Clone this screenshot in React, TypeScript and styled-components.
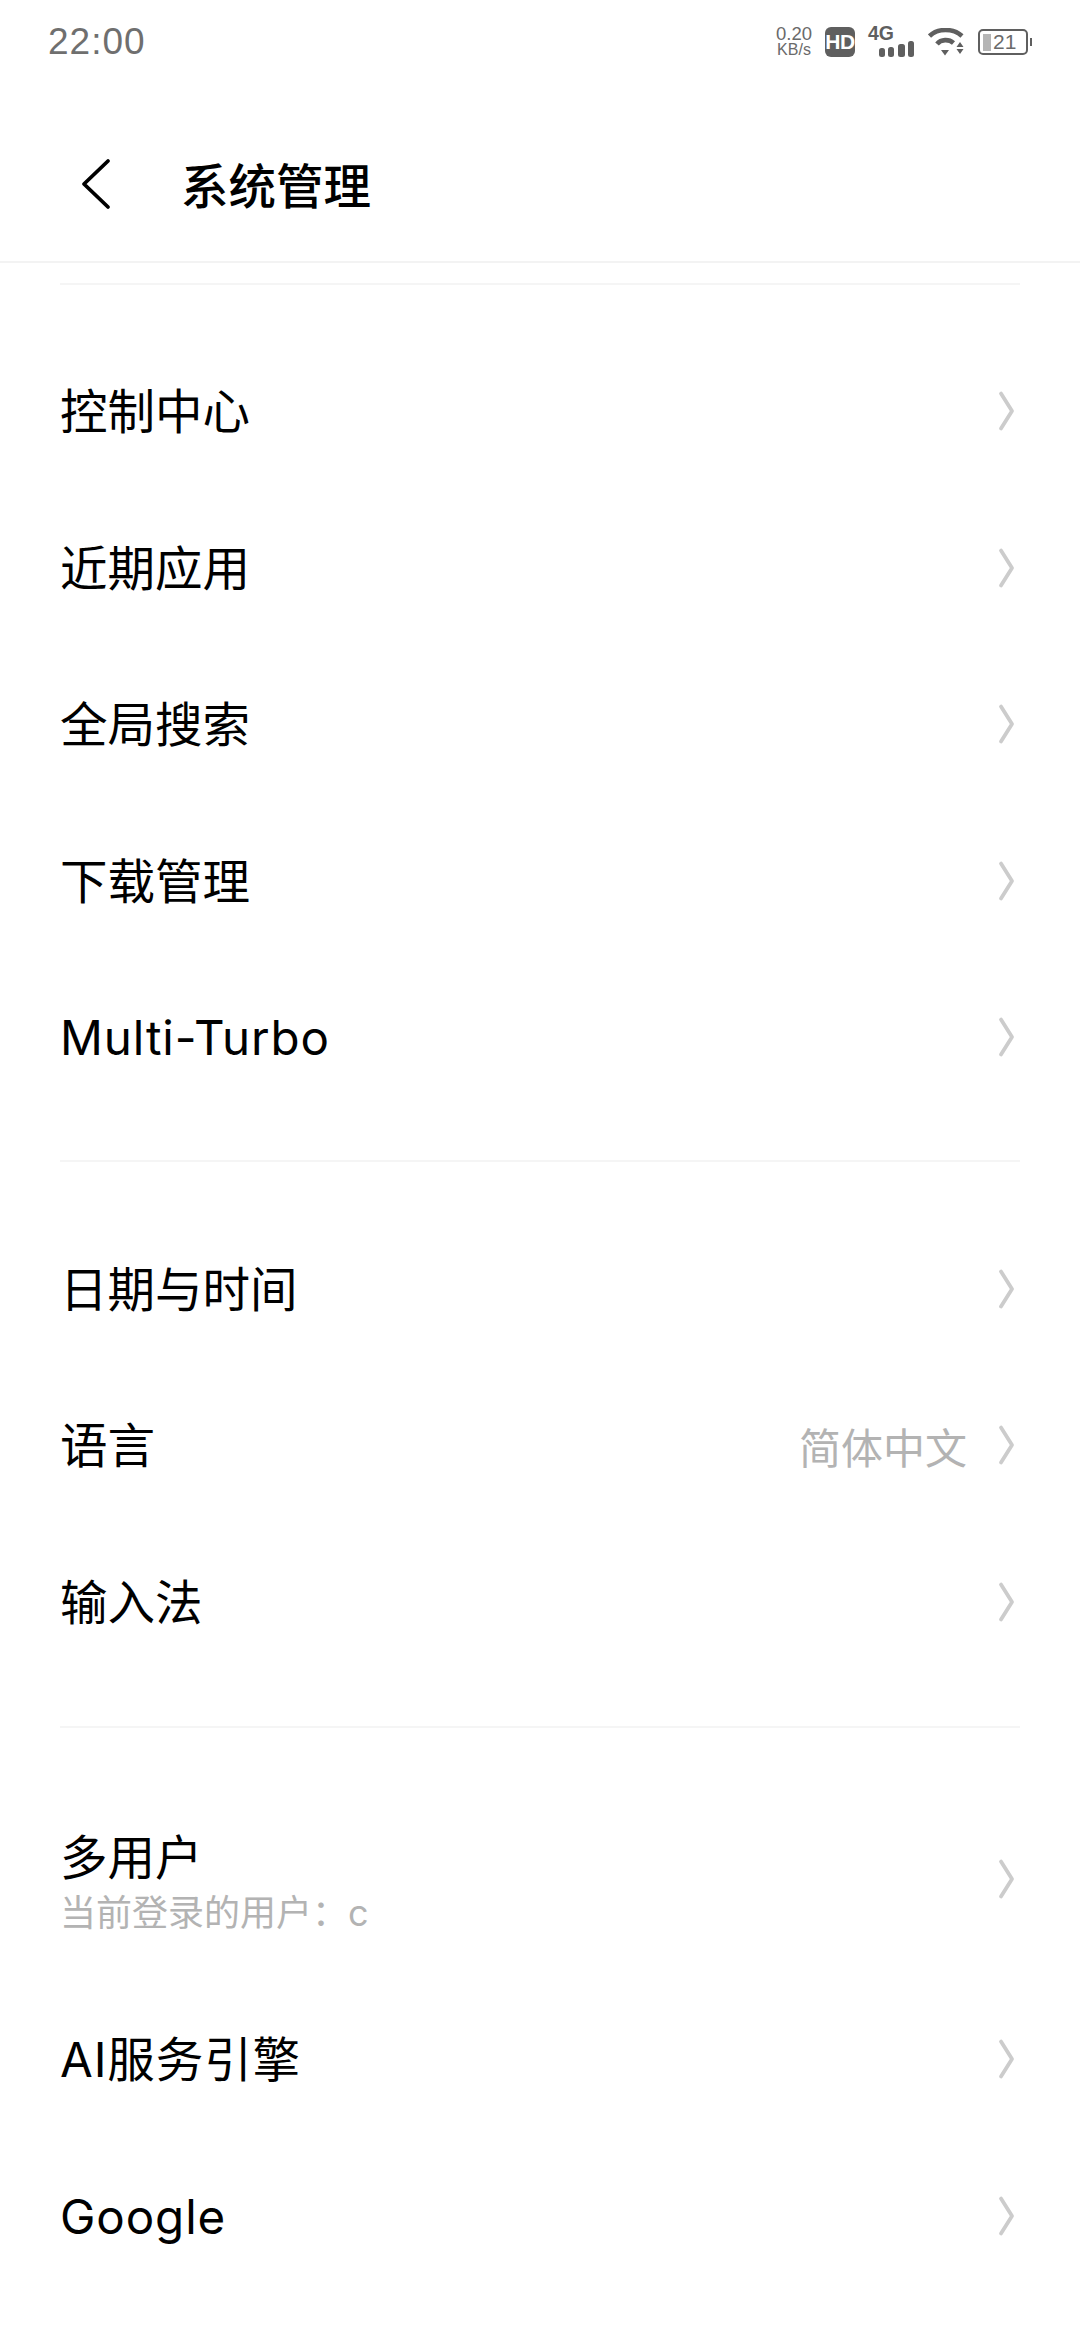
import React from 'react';
import styled, { createGlobalStyle } from 'styled-components';

const Global = createGlobalStyle`
  html, body { margin: 0; padding: 0; background: #fff; }
  body { font-family: "Liberation Sans", "Noto Sans CJK SC", sans-serif; }
`;

const Page = styled.div`
  width: 1080px;
  height: 2340px;
  overflow: hidden;
  background: #fff;
  color: #000;
`;

/* status bar */
const StatusBar = styled.div`
  height: 84px;
  display: flex;
  align-items: center;
  justify-content: space-between;
  padding: 0 48px;
`;

const Clock = styled.span`
  font-family: "Liberation Sans", sans-serif;
  font-size: 37px;
  color: #6f6f6f;
  letter-spacing: 1px;
`;

const StatusIcons = styled.div`
  display: flex;
  align-items: center;
`;

const Speed = styled.div`
  width: 38px;
  margin-right: 12px;
  display: flex;
  flex-direction: column;
  align-items: center;
  font-size: 18.5px;
  line-height: 16px;
  color: #6a6a6a;
`;

const SpeedUnit = styled.span`
  font-size: 16px;
  line-height: 16px;
`;

const HdBadge = styled.div`
  width: 30px;
  height: 30px;
  margin-right: 12px;
  border-radius: 6px;
  background: #5f5f5f;
  color: #fff;
  font-size: 21px;
  font-weight: 700;
  line-height: 30px;
  text-align: center;
  letter-spacing: -0.5px;
`;

const Cell = styled.div`
  width: 47px;
  height: 30px;
  margin-right: 14px;
  position: relative;
`;

const CellLabel = styled.span`
  position: absolute;
  left: 1px;
  top: -4px;
  font-size: 19.5px;
  line-height: 20px;
  font-weight: 700;
  color: #5f5f5f;
`;

const Battery = styled.div`
  width: 50px;
  height: 26px;
  margin-left: 14px;
  margin-right: 4px;
  box-sizing: border-box;
  border: 2px solid #5f5f5f;
  border-radius: 5px;
  display: flex;
  align-items: center;
  padding-left: 3px;
  position: relative;
  font-size: 21px;
  color: #6a6a6a;

  &::after {
    content: '';
    position: absolute;
    right: -6px;
    top: 7px;
    width: 2px;
    height: 8px;
    background: #5f5f5f;
  }
`;

const BatteryFill = styled.span`
  width: 8px;
  height: 17px;
  margin-right: 2px;
  background: #b5b5b5;
`;

/* title bar */
const Header = styled.header`
  height: 179px;
  box-sizing: border-box;
  display: flex;
  align-items: center;
  padding: 22px 0 0 79px;
  border-bottom: 2px solid #f3f3f3;
`;

const BackIcon = styled.svg`
  width: 32px;
  height: 52px;
  margin-right: 70px;
  flex: none;
`;

const Title = styled.h1`
  margin: 0;
  font-family: "Noto Sans CJK SC", sans-serif;
  font-size: 47.5px;
  font-weight: 500;
  line-height: 60px;
`;

/* list */
const Divider = styled.div<{ $top?: number; $gap: number }>`
  height: 2px;
  margin: ${(p) => p.$top ?? 0}px 60px ${(p) => p.$gap}px;
  background: #f5f5f5;
`;

const Section = styled.section<{ $pad: number }>`
  padding-bottom: ${(p) => p.$pad}px;
`;

const Row = styled.div<{ $tall?: boolean }>`
  height: ${(p) => (p.$tall ? 205 : 156.5)}px;
  display: flex;
  align-items: center;
  padding: 0 65px 0 60px;
`;

const RowText = styled.div`
  flex: 1;
  min-width: 0;
`;

const Label = styled.div<{ $latin?: boolean }>`
  font-family: Inter, "Noto Sans CJK SC", sans-serif;
  font-size: 47.5px;
  line-height: 62px;
  margin-top: 2px;
  letter-spacing: ${(p) => (p.$latin ? '0.9px' : '0')};
  color: #000;
`;

const Sub = styled.div`
  font-family: Inter, "Noto Sans CJK SC", sans-serif;
  font-size: 36px;
  line-height: 40px;
  margin-top: 4px;
  color: #b3b3b3;
`;

const RowValue = styled.span`
  font-family: "Noto Sans CJK SC", sans-serif;
  font-size: 42px;
  color: #b3b3b3;
  margin-right: 28px;
`;

const ChevronIcon = styled.svg`
  width: 20px;
  height: 42px;
  flex: none;
`;

function Chevron() {
  return (
    <ChevronIcon viewBox="0 0 20 42">
      <path d="M6 3.5 L17 21 L6 38.5" fill="none" stroke="#cccccc" strokeWidth="3.8" strokeLinecap="round" strokeLinejoin="round" />
    </ChevronIcon>
  );
}

type Item = { label: string; value?: string; sub?: string };

const groupA: Item[] = [
  { label: '控制中心' },
  { label: '近期应用' },
  { label: '全局搜索' },
  { label: '下载管理' },
  { label: 'Multi-Turbo' },
];
const groupB: Item[] = [
  { label: '日期与时间' },
  { label: '语言', value: '简体中文' },
  { label: '输入法' },
];
const groupC: Item[] = [
  { label: '多用户', sub: '当前登录的用户：c' },
  { label: 'AI服务引擎' },
  { label: 'Google' },
];

function ListRow({ item }: { item: Item }) {
  return (
    <Row $tall={!!item.sub}>
      <RowText>
        <Label $latin={/[A-Za-z]/.test(item.label)}>{item.label}</Label>
        {item.sub && <Sub>{item.sub}</Sub>}
      </RowText>
      {item.value && <RowValue>{item.value}</RowValue>}
      <Chevron />
    </Row>
  );
}

export default function App() {
  return (
    <Page>
      <Global />
      <StatusBar>
        <Clock>22:00</Clock>
        <StatusIcons>
          <Speed>
            0.20
            <SpeedUnit>KB/s</SpeedUnit>
          </Speed>
          <HdBadge>HD</HdBadge>
          <Cell>
            <CellLabel>4G</CellLabel>
            <svg width="47" height="30" viewBox="0 0 47 30">
              <rect x="12" y="21" width="6" height="9" rx="2.5" fill="#5f5f5f" />
              <rect x="21" y="20" width="6" height="10" rx="2.5" fill="#5f5f5f" />
              <rect x="31" y="17" width="7" height="13" rx="2.5" fill="#5f5f5f" />
              <rect x="41" y="14" width="6" height="16" rx="2.5" fill="#5f5f5f" />
            </svg>
          </Cell>
          <svg width="36" height="28" viewBox="0 0 36 28">
            <path d="M1.5 8 C10 0 25 0 34 8" fill="none" stroke="#5f5f5f" strokeWidth="4.6" />
            <path d="M9 16 C13 11 21 11 25.5 15" fill="none" stroke="#5f5f5f" strokeWidth="4.6" />
            <path d="M13 22 L21 22 L17 27.5 Z" fill="#5f5f5f" />
            <path d="M28.5 19 L32 14 L35.5 19 Z M28.5 21 L35.5 21 L32 26 Z" fill="#5f5f5f" />
          </svg>
          <Battery>
            <BatteryFill />
            21
          </Battery>
        </StatusIcons>
      </StatusBar>
      <Header>
        <BackIcon viewBox="0 0 32 52">
          <path d="M29 3 L5 26 L29 49" fill="none" stroke="#000" strokeWidth="3.8" strokeLinecap="round" strokeLinejoin="round" />
        </BackIcon>
        <Title>系统管理</Title>
      </Header>
      <Divider $top={20} $gap={48} />
      <Section $pad={44}>
        {groupA.map((item) => <ListRow key={item.label} item={item} />)}
      </Section>
      <Divider $gap={49} />
      <Section $pad={46}>
        {groupB.map((item) => <ListRow key={item.label} item={item} />)}
      </Section>
      <Divider $gap={48} />
      <Section $pad={0}>
        {groupC.map((item) => <ListRow key={item.label} item={item} />)}
      </Section>
    </Page>
  );
}
